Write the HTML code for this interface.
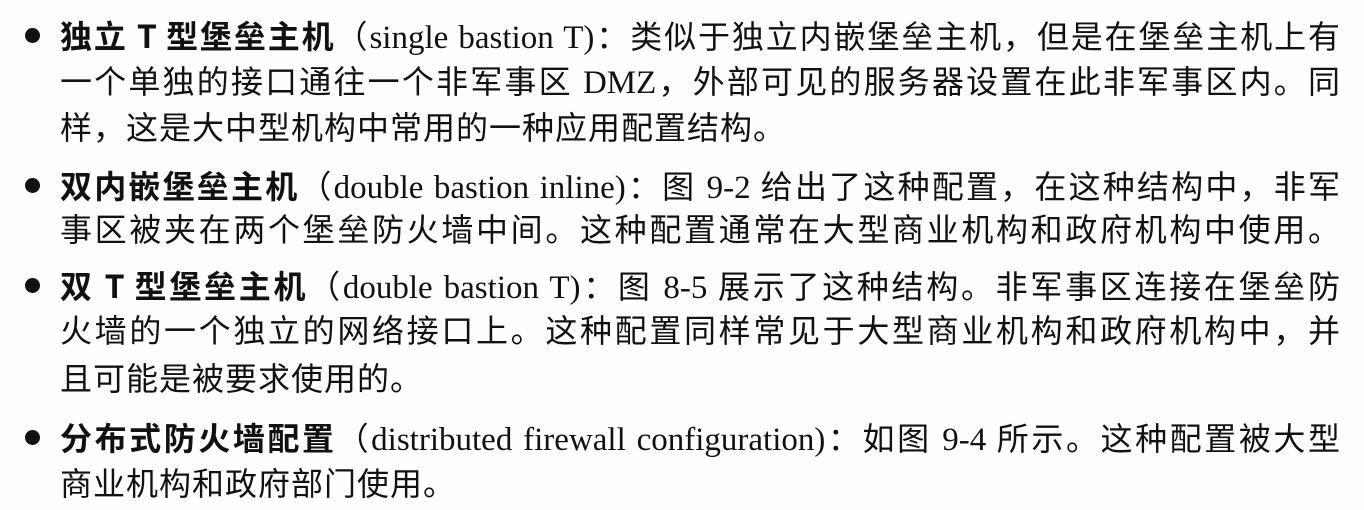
<!DOCTYPE html>
<html><head><meta charset="utf-8"><style>
html,body{margin:0;padding:0;background:#fefefe;}
body{width:1364px;height:510px;position:relative;overflow:hidden;color:#111;
font-family:"Liberation Serif","Noto Sans CJK SC",serif;font-size:32px;}
.l{position:absolute;left:60px;width:1280px;height:46px;line-height:46px;white-space:nowrap;}
.j{text-align:justify;text-align-last:justify;}
.n{letter-spacing:1px;}
.e{font-size:33px;}
.b{font-family:"Noto Sans CJK SC",sans-serif;font-weight:bold;}
.dot{position:absolute;left:25px;width:15px;height:15px;border-radius:50%;background:#111;}
</style></head><body>
<div class="dot" style="top:28px"></div>
<div class="l j" style="top:12px"><span class="b">独立 T 型堡垒主机</span>（<span class="e">single bastion T)</span>：类似于独立内嵌堡垒主机，但是在堡垒主机上有</div>
<div class="l j" style="top:59px">一个单独的接口通往一个非军事区 <span class="e">DMZ</span>，外部可见的服务器设置在此非军事区内。同</div>
<div class="l n" style="top:105px">样，这是大中型机构中常用的一种应用配置结构。</div>
<div class="dot" style="top:178px"></div>
<div class="l j" style="top:162px"><span class="b">双内嵌堡垒主机</span>（<span class="e">double bastion inline)</span>：图 <span class="e">9-2</span> 给出了这种配置，在这种结构中，非军</div>
<div class="l j" style="top:207px">事区被夹在两个堡垒防火墙中间。这种配置通常在大型商业机构和政府机构中使用。</div>
<div class="dot" style="top:278px"></div>
<div class="l j" style="top:262px"><span class="b">双 T 型堡垒主机</span>（<span class="e">double bastion T)</span>：图 <span class="e">8-5</span> 展示了这种结构。非军事区连接在堡垒防</div>
<div class="l j" style="top:308px">火墙的一个独立的网络接口上。这种配置同样常见于大型商业机构和政府机构中，并</div>
<div class="l n" style="top:356px">且可能是被要求使用的。</div>
<div class="dot" style="top:430px"></div>
<div class="l j" style="top:414px"><span class="b">分布式防火墙配置</span>（<span class="e">distributed firewall configuration)</span>：如图 <span class="e">9-4</span> 所示。这种配置被大型</div>
<div class="l n" style="top:461px">商业机构和政府部门使用。</div>
</body></html>
